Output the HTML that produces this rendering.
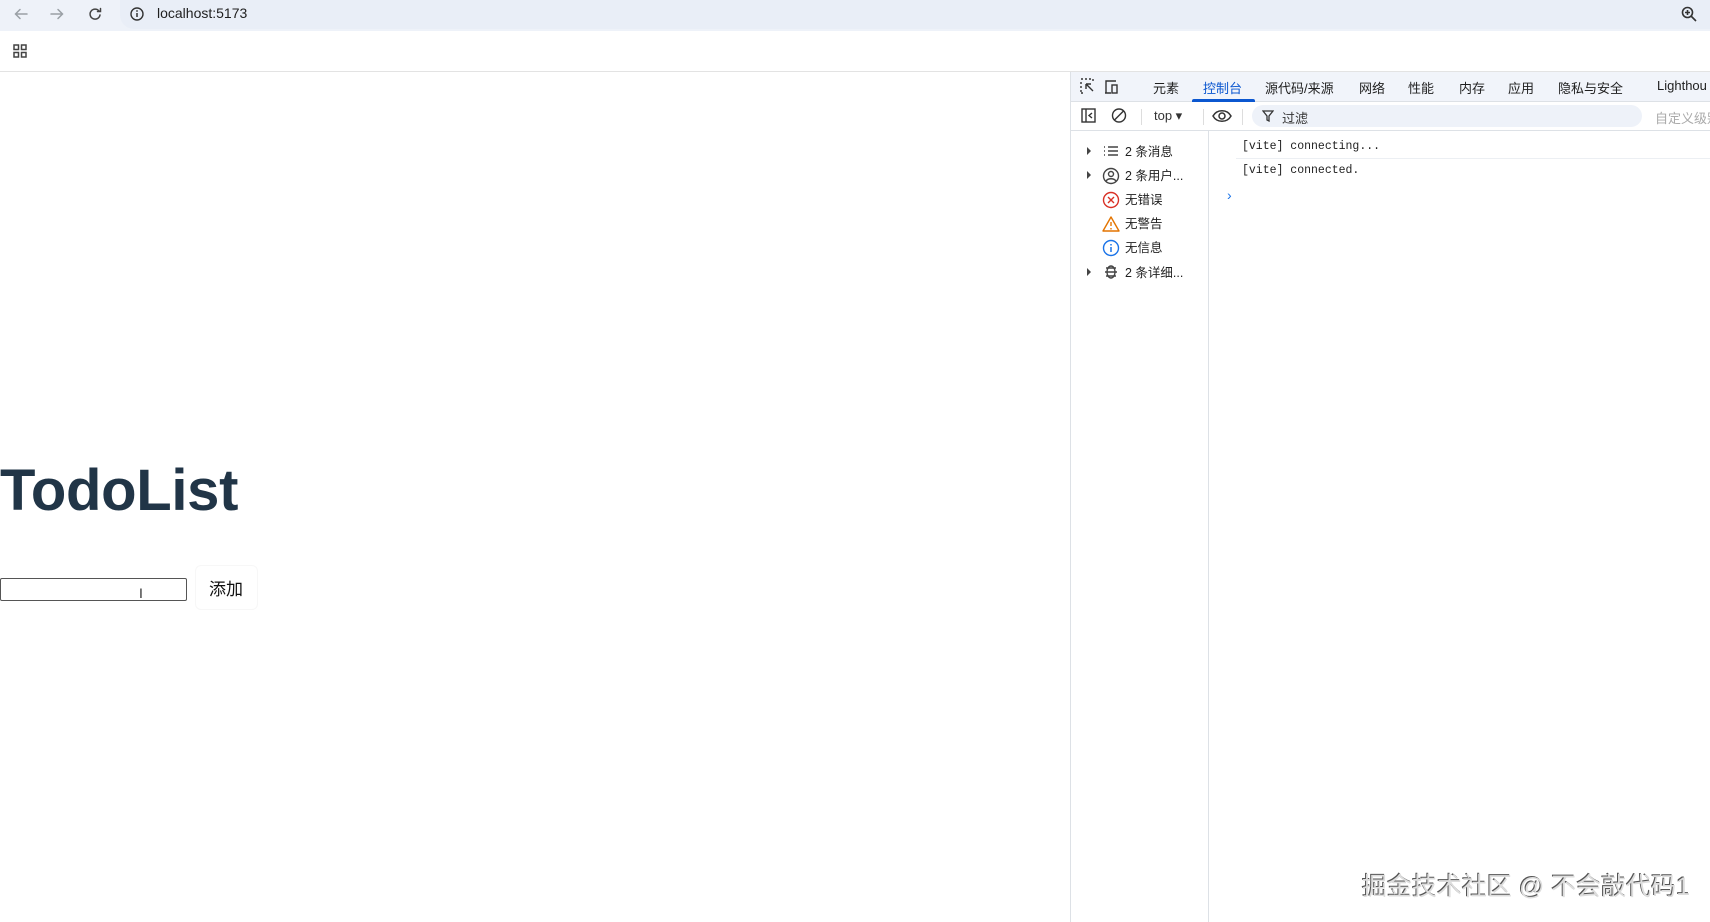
<!DOCTYPE html>
<html><head><meta charset="utf-8"><style>
*{margin:0;padding:0;box-sizing:border-box}
body{width:1710px;height:922px;overflow:hidden;background:#fff;font-family:"Liberation Sans","Noto Sans CJK SC",sans-serif;position:relative}
.a{position:absolute;white-space:nowrap}
.cn{font-family:"Liberation Sans","Noto Sans CJK SC",sans-serif}
.tab{position:absolute;top:78px;font-size:13px;color:#1f1f1f}
.side{position:absolute;left:1125px;font-size:12.5px;color:#1f1f1f}
.mono{font-family:"Liberation Mono",monospace;font-size:11.5px;color:#1f1f1f}
</style></head><body>
<div class="a" style="left:0;top:0;width:1710px;height:31px;background:#eef2f9"></div>
<div class="a" style="left:120px;top:0;width:1590px;height:29px;background:#e9eef7;border-radius:0 0 0 14px"></div>
<svg class="a" style="left:13px;top:6px" width="110" height="18" viewBox="0 0 110 18" fill="none" stroke-width="1.5" stroke-linecap="round">
<path d="M14 8H3M7 3.5L2.5 8 7 12.5" stroke="#9aa0a6"/>
<path d="M38 8h11M45 3.5L49.5 8 45 12.5" stroke="#9aa0a6"/>
<path d="M86 5a5 5 0 1 0 1 4" stroke="#444"/><path d="M87.5 2.5v3h-3" stroke="#444"/>
</svg>
<svg class="a" style="left:129px;top:6px" width="16" height="16" viewBox="0 0 16 16"><circle cx="8" cy="8" r="6" fill="none" stroke="#333" stroke-width="1.4"/><path d="M8 7v4" stroke="#333" stroke-width="1.5"/><circle cx="8" cy="5" r=".9" fill="#333"/></svg>
<div class="a" style="left:157px;top:5px;font-size:14px;color:#1f1f1f">localhost:5173</div>
<svg class="a" style="left:1680px;top:5px" width="18" height="18" viewBox="0 0 18 18" fill="none" stroke="#333" stroke-width="1.6"><circle cx="7.5" cy="7.5" r="5"/><path d="M11 11l5 5M7.5 5v5M5 7.5h5"/></svg>
<svg class="a" style="left:13px;top:44px" width="14" height="14" viewBox="0 0 14 14" fill="none" stroke="#444" stroke-width="1.5"><rect x="1" y="1" width="4.5" height="4.5"/><rect x="8.5" y="1" width="4.5" height="4.5"/><rect x="1" y="8.5" width="4.5" height="4.5"/><rect x="8.5" y="8.5" width="4.5" height="4.5"/></svg>
<div class="a" style="left:0;top:71px;width:1710px;height:1px;background:#e3e3e3"></div>
<div class="a" style="left:0;top:457px;font-size:58px;font-weight:bold;color:#213547;letter-spacing:-0.3px">TodoList</div>
<div class="a" style="left:0;top:578px;width:187px;height:23px;border:1px solid #555;border-radius:2px"></div>
<div class="a" style="left:139px;top:585px;font-size:14px;color:#333">I</div>
<div class="a" style="left:195px;top:565px;width:63px;height:45px;border:1px solid #f7f7f7;border-radius:6px"></div>
<div class="a cn" style="left:209px;top:575px;font-size:17px;color:#111">添加</div>
<div class="a" style="left:1070px;top:72px;width:1px;height:850px;background:#dde1e6"></div>
<div class="a" style="left:1071px;top:72px;width:640px;height:30px;background:#f1f4fa;border-bottom:1px solid #dde1e6"></div>
<svg class="a" style="left:1080px;top:78px" width="40" height="18" viewBox="0 0 40 18" fill="none" stroke="#333" stroke-width="1.4">
<path d="M1 1h2M5 1h2M9 1h2M13 1v2M1 4v2M1 8v2M1 12v2M1 15h2" /><path d="M6 6l7 7M6 6v5M6 6h5"/>
<path d="M26 15V3h10M25 15h6" /><rect x="32" y="7" width="5" height="8"/>
</svg>
<div class="tab" style="left:1153px">元素</div>
<div class="tab" style="left:1203px;color:#0b57d0">控制台</div>
<div class="a" style="left:1192px;top:99px;width:63px;height:3px;background:#0b57d0;border-radius:2px 2px 0 0"></div>
<div class="tab" style="left:1265px">源代码/来源</div>
<div class="tab" style="left:1359px">网络</div>
<div class="tab" style="left:1408px">性能</div>
<div class="tab" style="left:1459px">内存</div>
<div class="tab" style="left:1508px">应用</div>
<div class="tab" style="left:1558px">隐私与安全</div>
<div class="tab" style="left:1657px">Lighthou</div>
<div class="a" style="left:1071px;top:130px;width:640px;height:1px;background:#dde1e6"></div>
<svg class="a" style="left:1081px;top:108px" width="50" height="16" viewBox="0 0 50 16" fill="none" stroke="#333" stroke-width="1.4">
<rect x="1" y="1" width="13" height="13"/><path d="M5 1v13M11 5l-3 2.5 3 2.5"/>
<circle cx="38" cy="7.5" r="6.5"/><path d="M33.5 12l9-9"/>
</svg>
<div class="a" style="left:1141px;top:109px;width:1px;height:16px;background:#ddd"></div>
<div class="a" style="left:1154px;top:108px;font-size:13px;color:#333">top ▾</div>
<div class="a" style="left:1203px;top:109px;width:1px;height:16px;background:#ddd"></div>
<svg class="a" style="left:1212px;top:108px" width="20" height="16" viewBox="0 0 20 16" fill="none" stroke="#333" stroke-width="1.5"><path d="M1 8c4-7 14-7 18 0-4 7-14 7-18 0z"/><circle cx="10" cy="8" r="3"/></svg>
<div class="a" style="left:1242px;top:109px;width:1px;height:16px;background:#ddd"></div>
<div class="a" style="left:1252px;top:105px;width:390px;height:22px;background:#eef2f9;border-radius:11px"></div>
<svg class="a" style="left:1262px;top:110px" width="12" height="12" viewBox="0 0 12 12"><path d="M1 1h10L7 6v5L5 10V6z" fill="none" stroke="#333" stroke-width="1.3"/></svg>
<div class="a" style="left:1282px;top:108px;font-size:13px;color:#333">过滤</div>
<div class="a" style="left:1655px;top:108px;font-size:13px;color:#aaa">自定义级别</div>
<div class="a" style="left:1208px;top:131px;width:1px;height:791px;background:#dde1e6"></div>
<svg class="a" style="left:1084px;top:142px" width="40" height="140" viewBox="0 0 40 140">
<g fill="#444"><path d="M3 5l4 4-4 4z"/><path d="M3 29l4 4-4 4z"/><path d="M3 126l4 4-4 4z"/></g>
<g fill="none" stroke="#444" stroke-width="1.4"><path d="M20 5h1M24 5h10M20 9h1M24 9h10M20 13h1M24 13h10"/>
<circle cx="27" cy="34" r="7.5"/><circle cx="27" cy="32" r="2.5"/><path d="M22 39c2-3 8-3 10 0"/>
<path d="M22 126h10M21 130h12M22 134h10"/><ellipse cx="27" cy="130" rx="4" ry="6"/></g>
<circle cx="27" cy="58" r="7.5" fill="none" stroke="#d93025" stroke-width="1.4"/><path d="M24 55l6 6M30 55l-6 6" stroke="#d93025" stroke-width="1.4"/>
<path d="M27 75l8 14H19z" fill="none" stroke="#e37400" stroke-width="1.4" stroke-linejoin="round"/><path d="M27 80v4M27 86v1.5" stroke="#e37400" stroke-width="1.4"/>
<circle cx="27" cy="106" r="7.5" fill="none" stroke="#1a73e8" stroke-width="1.4"/><path d="M27 105v5M27 102v1.5" stroke="#1a73e8" stroke-width="1.5"/>
</svg>
<div class="side" style="top:141px">2 条消息</div>
<div class="side" style="top:165px">2 条用户...</div>
<div class="side" style="top:189px">无错误</div>
<div class="side" style="top:213px">无警告</div>
<div class="side" style="top:237px">无信息</div>
<div class="side" style="top:262px">2 条详细...</div>
<div class="a mono" style="left:1242px;top:140px">[vite] connecting...</div>
<div class="a" style="left:1236px;top:158px;width:474px;height:1px;background:#eceff3"></div>
<div class="a mono" style="left:1242px;top:164px">[vite] connected.</div>
<div class="a" style="left:1227px;top:187px;font-size:14px;color:#1a73e8">›</div>
<div class="a cn" style="left:1362px;top:867px;font-size:25px;color:#ddd;text-shadow:-1px -1px 0 #555,1px 1px 0 #fff">掘金技术社区 @ 不会敲代码1</div>
</body></html>
